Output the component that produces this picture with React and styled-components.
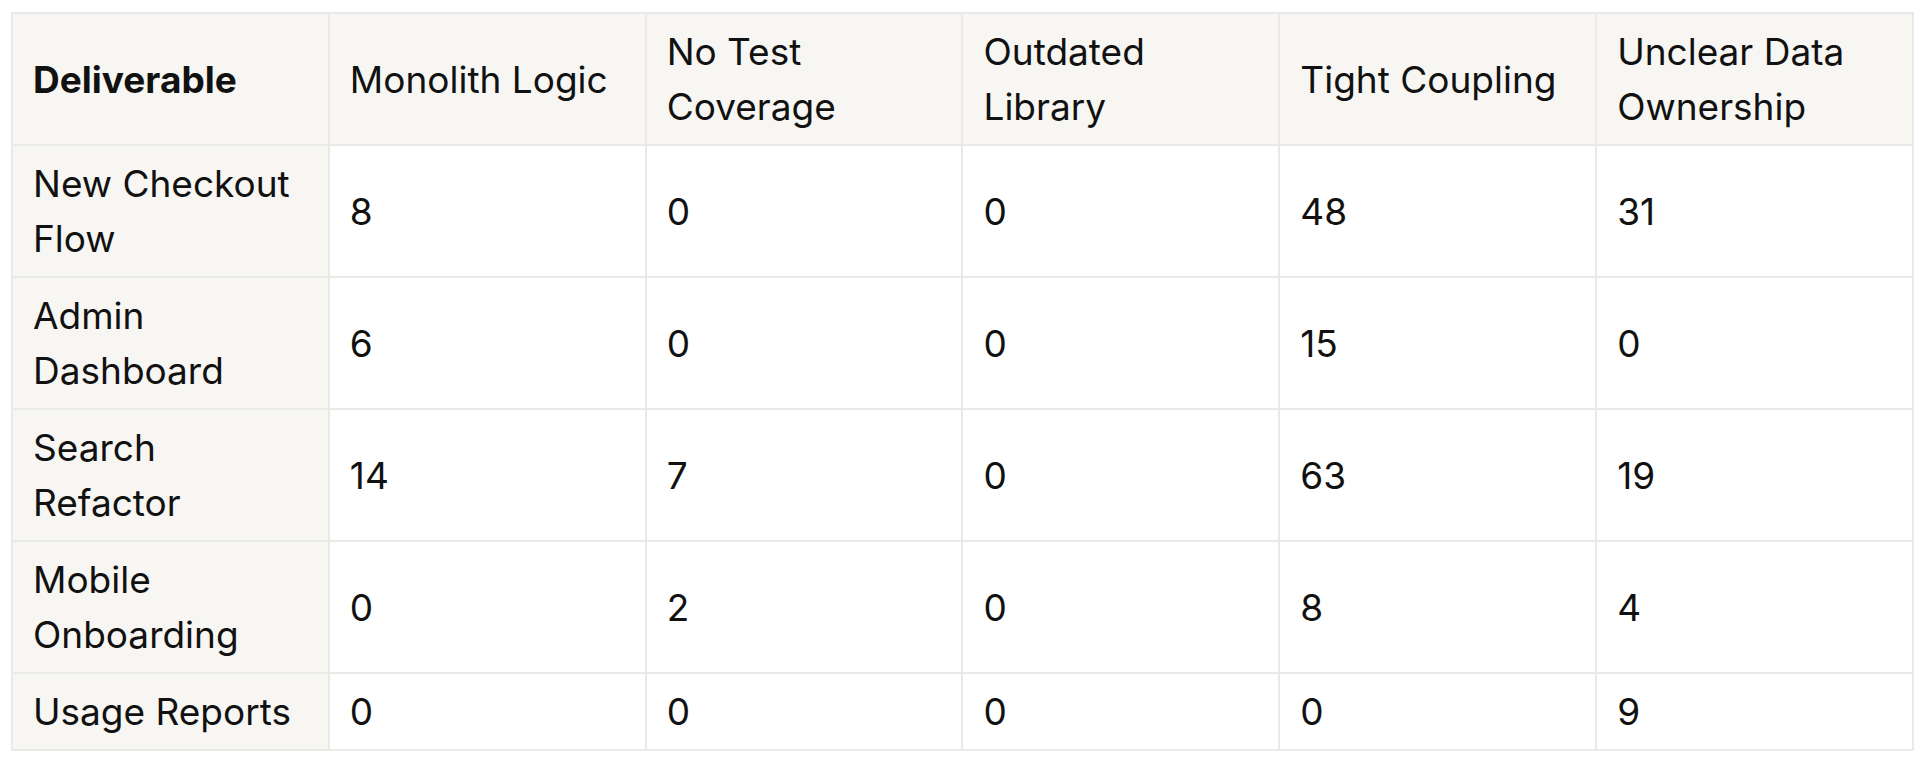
import React from "react";
import styled, { createGlobalStyle } from "styled-components";

const columns = [
  "Monolith Logic",
  "No Test Coverage",
  "Outdated Library",
  "Tight Coupling",
  "Unclear Data Ownership",
];

const rows = [
  { name: "New Checkout Flow", values: [8, 0, 0, 48, 31] },
  { name: "Admin Dashboard", values: [6, 0, 0, 15, 0] },
  { name: "Search Refactor", values: [14, 7, 0, 63, 19] },
  { name: "Mobile Onboarding", values: [0, 2, 0, 8, 4] },
  { name: "Usage Reports", values: [0, 0, 0, 0, 9] },
];

const App = () => {
  return (
    <>
      <GlobalStyle />
      <Page>
        <Table>
          <thead>
            <tr>
              <HeadCell $strong>Deliverable</HeadCell>
              {columns.map((c) => (
                <HeadCell key={c}>{c}</HeadCell>
              ))}
            </tr>
          </thead>
          <tbody>
            {rows.map((r) => (
              <tr key={r.name}>
                <RowLabel>{r.name}</RowLabel>
                {r.values.map((v, i) => (
                  <Cell key={i}>{v}</Cell>
                ))}
              </tr>
            ))}
          </tbody>
        </Table>
      </Page>
    </>
  );
};

export default App;

const GlobalStyle = createGlobalStyle`
  body {
    margin: 0;
    background: #ffffff;
    font-family: Inter, "Noto Sans", "Liberation Sans", sans-serif;
    color: #111111;
  }
`;

const Page = styled.div`
  padding: 12px 12px 12px 11px;
`;

const Table = styled.table`
  width: 100%;
  table-layout: fixed;
  border-collapse: collapse;
  font-size: 37px;
  line-height: 55px;
`;

const baseCell = `
  border: 2px solid #e9e9e7;
  padding: 10px 20px;
  text-align: left;
  vertical-align: middle;
  color: #111111;
`;

const HeadCell = styled.th`
  ${baseCell}
  background: #f7f6f3;
  font-weight: ${(p) => (p.$strong ? 700 : 400)};
`;

const RowLabel = styled.td`
  ${baseCell}
  background: #f7f6f3;
  font-weight: 400;
`;

const Cell = styled.td`
  ${baseCell}
  background: #ffffff;
`;
